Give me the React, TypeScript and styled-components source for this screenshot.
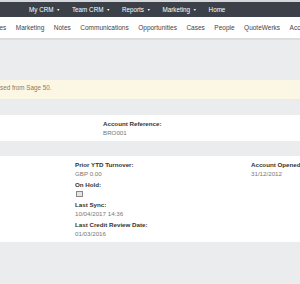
import styled, { createGlobalStyle } from 'styled-components';

const GlobalStyle = createGlobalStyle`
html, body {
margin: 0;
padding: 0;
background: #ebecee;
font-family: 'Liberation Sans', Arial, sans-serif;
overflow: hidden;
}
`;

const mainMenu = ['My CRM', 'Team CRM', 'Reports', 'Marketing'];
const tabs = ['Sales', 'Marketing', 'Notes', 'Communications', 'Opportunities', 'Cases', 'People', 'QuoteWerks', 'Accounts'];

const App = () => {
  return (
    <>
      <GlobalStyle />
      <Page>
        <TopBar>
          {mainMenu.map((item) => (
            <MenuItem key={item}>
              {item}
              <Caret>▼</Caret>
            </MenuItem>
          ))}
          <MenuItem>Home</MenuItem>
        </TopBar>
        <TabBar>
          <TabStrip>
            {tabs.map((tab) => (
              <Tab key={tab}>{tab}</Tab>
            ))}
          </TabStrip>
        </TabBar>
        <Spacer $height={40} />
        <Alert>sed from Sage 50.</Alert>
        <Spacer $height={15} />
        <Panel $pad={103}>
          <Field>
            <Label>Account Reference:</Label>
            <Value>BRO001</Value>
          </Field>
        </Panel>
        <Spacer $height={15} />
        <Panel $pad={75}>
          <Columns>
            <Column>
              <Field>
                <Label>Prior YTD Turnover:</Label>
                <Value>GBP 0.00</Value>
              </Field>
              <Field>
                <Label>On Hold:</Label>
                <Check />
              </Field>
              <Field>
                <Label>Last Sync:</Label>
                <Value>10/04/2017 14:36</Value>
              </Field>
              <Field>
                <Label>Last Credit Review Date:</Label>
                <Value>01/03/2016</Value>
              </Field>
            </Column>
            <Column>
              <Field>
                <Label>Account Opened:</Label>
                <Value>31/12/2012</Value>
              </Field>
            </Column>
          </Columns>
        </Panel>
      </Page>
    </>
  );
};

const Page = styled.div`
width: 300px;
height: 284px;
overflow: hidden;
background: #ebecee;
border-top: 2px solid #d6d7da;
box-sizing: border-box;
`;

const TopBar = styled.div`
height: 15px;
background: #3c4048;
display: flex;
align-items: center;
padding-left: 29px;
gap: 12px;
`;

const MenuItem = styled.span`
color: #ffffff;
font-size: 6.3px;
white-space: nowrap;
display: flex;
align-items: center;
gap: 3px;
`;

const Caret = styled.span`
font-size: 3.5px;
`;

const TabBar = styled.div`
height: 21px;
background: #ffffff;
border-bottom: 2px solid #dcdde0;
overflow: hidden;
`;

const TabStrip = styled.div`
display: flex;
align-items: center;
height: 100%;
gap: 9.5px;
margin-left: -10px;
`;

const Tab = styled.span`
color: #444;
font-size: 6.5px;
white-space: nowrap;
`;

const Spacer = styled.div<{ $height: number }>`
height: ${(p) => p.$height}px;
`;

const Alert = styled.div`
height: 20px;
background: #fcf7e4;
border-bottom: 1px solid #f5ecd0;
color: #8f7a5a;
font-size: 6.3px;
padding-top: 4px;
box-sizing: border-box;
`;

const Panel = styled.div<{ $pad: number }>`
background: #ffffff;
padding: 5px 0 4px ${(p) => p.$pad}px;
`;

const Columns = styled.div`
display: flex;
`;

const Column = styled.div`
width: 176px;
flex-shrink: 0;
display: flex;
flex-direction: column;
gap: 3px;
`;

const Field = styled.div`
display: flex;
flex-direction: column;
gap: 1px;
`;

const Label = styled.span`
font-weight: bold;
color: #333;
font-size: 6.2px;
line-height: 8px;
white-space: nowrap;
`;

const Value = styled.span`
color: #777;
font-size: 6.2px;
line-height: 8px;
white-space: nowrap;
`;

const Check = styled.span`
width: 5px;
height: 4px;
margin: 1px 0 1px 1px;
border: 1px solid #888;
background: #e4e4e4;
`;

export default App;
